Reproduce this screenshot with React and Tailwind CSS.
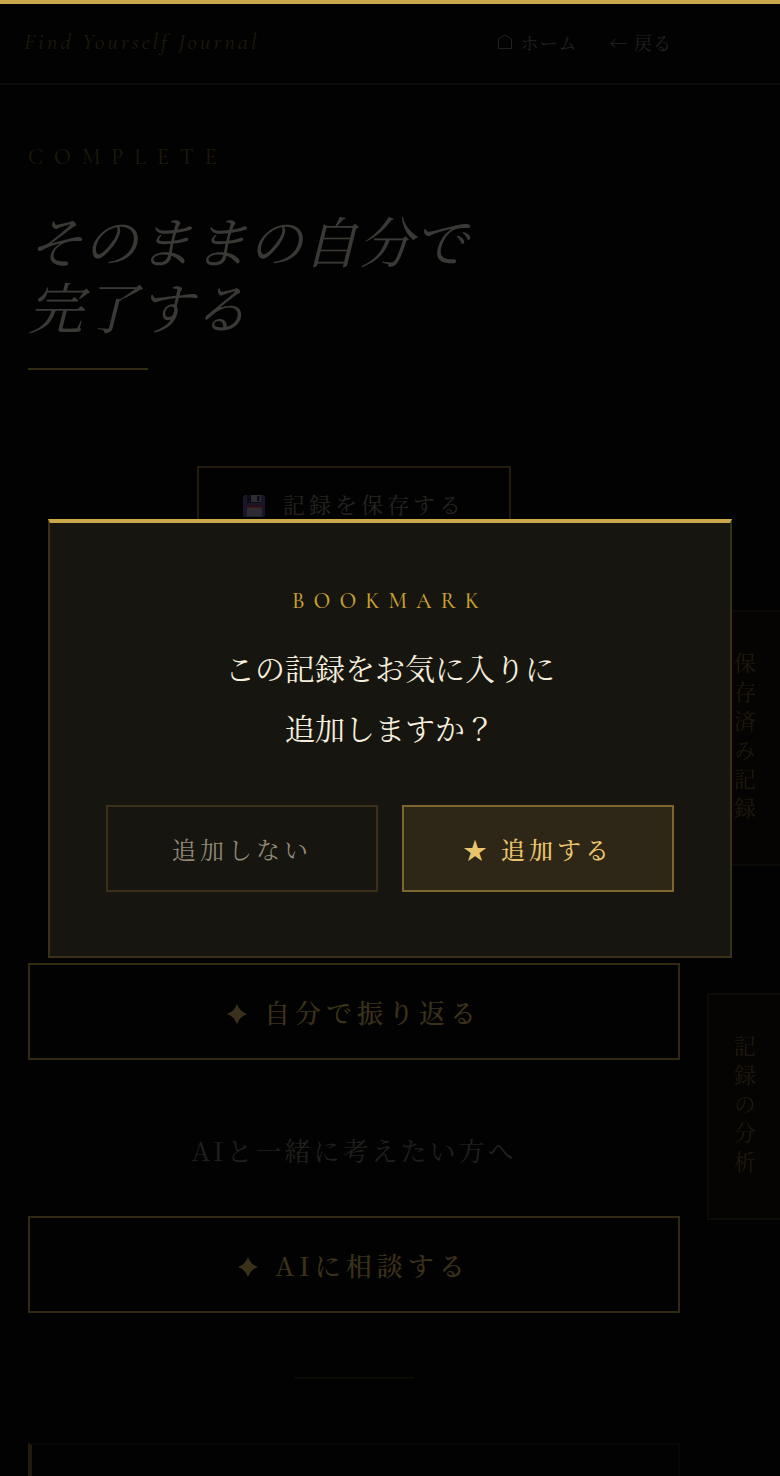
import React, { useState } from 'react';

const SideTab = ({ label }) => (
  <button
    type="button"
    className="flex w-[73px] items-center justify-center border-2 border-r-0 border-[#322c1c] bg-[#141008] pt-[40px] pb-[38px] text-[22px] leading-7 tracking-[7px] text-[#786030] [writing-mode:vertical-rl]"
  >
    {label}
  </button>
);

const SparkButton = ({ children }) => (
  <button
    type="button"
    className="flex w-full items-center justify-center gap-[17px] border-2 border-[#c4a24a] py-[27px] text-[26px] leading-[39px] font-medium text-[#e8c46c]"
  >
    <svg viewBox="0 0 20 20" className="mt-1 h-5 w-5" fill="currentColor" aria-hidden="true">
      <path d="M10 0Q12.500 7.500 20 10Q12.500 12.500 10 20Q7.500 12.500 0 10Q7.500 7.500 10 0Z" />
    </svg>
    <span className="tracking-[5px]">{children}</span>
  </button>
);

const FloppyIcon = () => (
  <svg viewBox="0 0 22 22" className="mt-1 h-[22px] w-[22px]" aria-hidden="true">
    <path d="M1.500 0H20.500L22 1.500V20.500L20.500 22H1.500L0 20.500V1.500Z" fill="#67569f" />
    <rect x="4" y="0" width="14" height="8" fill="#37305a" />
    <rect x="8" y="0" width="10" height="7" fill="#b9b4c4" />
    <rect x="14" y="1" width="2.500" height="5" fill="#37305a" />
    <rect x="4" y="11" width="15" height="10.500" fill="#b9aec4" />
    <rect x="4" y="10.500" width="15" height="2" fill="#c0303c" />
  </svg>
);

const Header = () => (
  <header className="flex items-center justify-between border-b-2 border-[#2e2a18] pt-[23px] pr-[108px] pb-[26px] pl-6">
    <a
      href="#top"
      className="font-['Cormorant_Garamond','Liberation_Serif',serif] text-[23px] leading-[30px] tracking-[3px] text-[#786430] italic"
    >
      Find Yourself Journal
    </a>
    <nav className="flex items-center gap-8 text-[18px] leading-[30px] tracking-[1px] text-[#8a8478]">
      <a href="#home" className="flex items-center gap-[7px]">
        <svg viewBox="0 0 16 16" className="h-4 w-4" fill="none" stroke="currentColor" aria-hidden="true">
          <path d="M1.500 14.500V5L8 1L14.500 5V14.500Z" />
        </svg>
        <span>ホーム</span>
      </a>
      <a href="#back">← 戻る</a>
    </nav>
  </header>
);

const BookmarkDialog = ({ onClose }) => (
  <div className="fixed inset-0 z-40 flex items-center justify-center bg-black/75 px-12">
    <div
      role="dialog"
      aria-modal="true"
      aria-labelledby="bookmark-title"
      className="w-full max-w-[720px] border-2 border-t-4 border-[#3a3019] border-t-[#c9a84c] bg-[#161510] px-14 py-16 text-center"
    >
      <p className="mb-[22px] font-['Cormorant_Garamond','Liberation_Serif',serif] text-[22px] leading-7 font-medium tracking-[9px] text-[#c9a030]">
        BOOKMARK
      </p>
      <h2 id="bookmark-title" className="mb-12 text-[30px] leading-[60px] text-[#f5eedc]">
        この記録をお気に入りに
        <br />
        追加しますか？
      </h2>
      <div className="grid grid-cols-2 gap-6 text-[24px] leading-[39px] tracking-[4px]">
        <button
          type="button"
          onClick={onClose}
          className="border-2 border-[#3a3019] py-[22px] text-[#8f8877]"
        >
          追加しない
        </button>
        <button
          type="button"
          onClick={onClose}
          className="border-2 border-[#7f662d] bg-[#2e2617] py-[22px] font-medium text-[#e8c46c]"
        >
          ★ 追加する
        </button>
      </div>
    </div>
  </div>
);

const App = () => {
  const [open, setOpen] = useState(true);

  return (
    <div className="flex min-h-screen flex-col bg-[#080808] font-['Noto_Serif_CJK_JP','Noto_Serif_JP','Liberation_Serif','Noto_Sans_CJK_JP',serif]">
      <div className="relative z-50 h-1 bg-[#c9a84c]" />
      <Header />

      <main className="flex flex-1 flex-col pt-[58px] pr-[100px] pl-7">
        <p className="font-['Cormorant_Garamond','Liberation_Serif',serif] text-[22px] leading-7 tracking-[11px] text-[#786430]">
          COMPLETE
        </p>
        <h1 className="mt-9 text-[55px] leading-[66px] text-[#ece4d8] italic">
          そのままの自分で
          <br />
          完了する
        </h1>
        <div className="mt-[29px] h-0.5 w-[120px] bg-[#c9a84c]" />

        <button
          type="button"
          className="mt-24 flex items-center gap-[18px] self-center border-2 border-[#8a6e34] px-11 py-[19px] text-[22px] leading-[34px] text-[#969080]"
        >
          <FloppyIcon />
          <span className="tracking-[4px]">記録を保存する</span>
        </button>

        <div className="mt-[421px]">
          <SparkButton>自分で振り返る</SparkButton>
        </div>
        <p className="mt-[70px] mb-[46px] text-center text-[26px] leading-10 tracking-[3px] text-[#807c70]">
          AIと一緒に考えたい方へ
        </p>
        <SparkButton>AIに相談する</SparkButton>

        <div className="mt-16 h-0.5 w-[120px] self-center bg-[#2c2814]" />
        <section className="mt-16 min-h-8 flex-1 border-2 border-b-0 border-l-4 border-[#221e10] border-l-[#8a6a38]" />
      </main>

      <aside className="fixed top-[610px] right-0 z-30 flex flex-col gap-[127px]">
        <SideTab label="保存済み記録" />
        <SideTab label="記録の分析" />
      </aside>

      {open && <BookmarkDialog onClose={() => setOpen(false)} />}
    </div>
  );
};

export default App;
